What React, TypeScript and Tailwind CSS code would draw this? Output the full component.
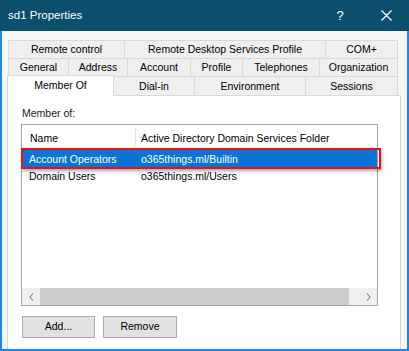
const font = { fontFamily: '"Liberation Sans", Arial, sans-serif' };

const row1 = [
  { label: 'Remote control', w: 'w-[116px]' },
  { label: 'Remote Desktop Services Profile', w: 'w-[201px]' },
  { label: 'COM+', w: 'w-[73px]' },
];

const row2 = [
  { label: 'General', w: 'w-[60px]' },
  { label: 'Address', w: 'w-[59px]' },
  { label: 'Account', w: 'w-[63px]' },
  { label: 'Profile', w: 'w-[52px]' },
  { label: 'Telephones', w: 'w-[77px]' },
  { label: 'Organization', w: 'w-[79px]' },
];

const row3 = [
  { label: 'Dial-in', w: 'w-[81px]' },
  { label: 'Environment', w: 'w-[111px]' },
  { label: 'Sessions', w: 'w-[92px]' },
];

const groups = [
  { name: 'Account Operators', folder: 'o365things.ml/Builtin', selected: true },
  { name: 'Domain Users', folder: 'o365things.ml/Users', selected: false },
];

function TabRow({ tabs }: { tabs: { label: string; w: string }[] }) {
  return (
    <div className="flex h-[18px]">
      {tabs.map((t, i) => (
        <div
          key={t.label}
          className={`${t.w} flex items-center justify-center pt-px border-t border-l border-[#d9d9d9] bg-[#efefef] ${
            i === tabs.length - 1 ? 'border-r' : ''
          }`}
        >
          {t.label}
        </div>
      ))}
    </div>
  );
}

function Chevron({ dir }: { dir: 'left' | 'right' }) {
  return (
    <svg width="5" height="8" viewBox="0 0 5 8">
      <path
        d={dir === 'left' ? 'M4 0.5 L1 4 L4 7.5' : 'M1 0.5 L4 4 L1 7.5'}
        fill="none"
        stroke="#7a7a7a"
        strokeWidth="1.1"
      />
    </svg>
  );
}

export default function App() {
  return (
    <div className="w-[409px] h-[351px] flex flex-col text-[10.5px] text-black" style={font}>
      {/* title bar */}
      <div className="h-[31px] shrink-0 bg-[#0b4f6c] flex items-center text-white">
        <span className="pl-[8px] text-[11.5px] flex-1">sd1 Properties</span>
        <span className="w-[46px] text-center text-[13px]">?</span>
        <span className="w-[46px] flex justify-center">
          <svg width="11" height="11" viewBox="0 0 11 11">
            <path d="M0.5 0.5 L10.5 10.5 M10.5 0.5 L0.5 10.5" stroke="#fff" strokeWidth="1.2" />
          </svg>
        </span>
      </div>

      <div className="flex-1 flex flex-col border-x-2 border-b-2 border-[#1a86f0] bg-[#f6f6f6] pt-[9px]">
        <div className="pl-[6px]">
          <TabRow tabs={row1} />
          <TabRow tabs={row2} />
        </div>
        <div className="flex items-end h-[19px] pl-[5px]">
          <div className="relative z-10 w-[107px] h-[21px] -mb-px bg-white border-t border-l border-r border-[#d9d9d9] flex justify-center pt-[2px]">
            Member Of
          </div>
          {row3.map((t) => (
            <div
              key={t.label}
              className={`${t.w} h-[19px] flex items-center justify-center pt-px border-t border-r border-[#d9d9d9] bg-[#efefef]`}
            >
              {t.label}
            </div>
          ))}
        </div>

        {/* tab page */}
        <div className="flex-1 ml-[5px] mr-[6px] bg-white border-t border-x border-[#d9d9d9] pl-[13px] pt-[10px]">
          <div className="h-[14px] leading-[14px] ml-px text-[#1a1a1a]">Member of:</div>

          <div className="relative mt-[4px] w-[357px] h-[182px] border border-[#a5a5a5] flex flex-col">
            <div className="h-[25px] flex items-center shrink-0">
              <div className="w-[113px] pl-[8px] pt-[2px]">Name</div>
              <div className="w-px h-[22px] bg-[#e5e5e5]" />
              <div className="pl-[5px] pt-[2px]">Active Directory Domain Services Folder</div>
            </div>
            {groups.map((g) => (
              <div
                key={g.name}
                className={`h-[17px] flex items-center pt-[2px] ${g.selected ? 'bg-[#0a74d6] text-white' : ''}`}
              >
                <div className="w-[114px] pl-[7px]">{g.name}</div>
                <div className="pl-[5px]">{g.folder}</div>
              </div>
            ))}
            <div className="flex-1" />
            <div className="h-[17px] flex bg-[#f0f0f0] shrink-0">
              <div className="w-[18px] flex items-center justify-center">
                <Chevron dir="left" />
              </div>
              <div className="w-[309px] bg-[#cdcdcd]" />
              <div className="flex-1" />
              <div className="w-[17px] flex items-center justify-center">
                <Chevron dir="right" />
              </div>
            </div>

            {/* highlight annotation */}
            <div className="absolute left-[-1px] top-[23px] w-[360px] h-[21px] border-2 border-[#e8101a] shadow-[1px_2px_3px_rgba(0,0,0,0.35)]" />
          </div>

          <div className="flex gap-[8px] mt-[10px] ml-px">
            <div className="w-[73px] h-[22px] bg-[#e1e1e1] border border-[#adadad] flex items-center justify-center">
              Add...
            </div>
            <div className="w-[74px] h-[22px] bg-[#e1e1e1] border border-[#adadad] flex items-center justify-center">
              Remove
            </div>
          </div>
        </div>
      </div>
    </div>
  );
}
